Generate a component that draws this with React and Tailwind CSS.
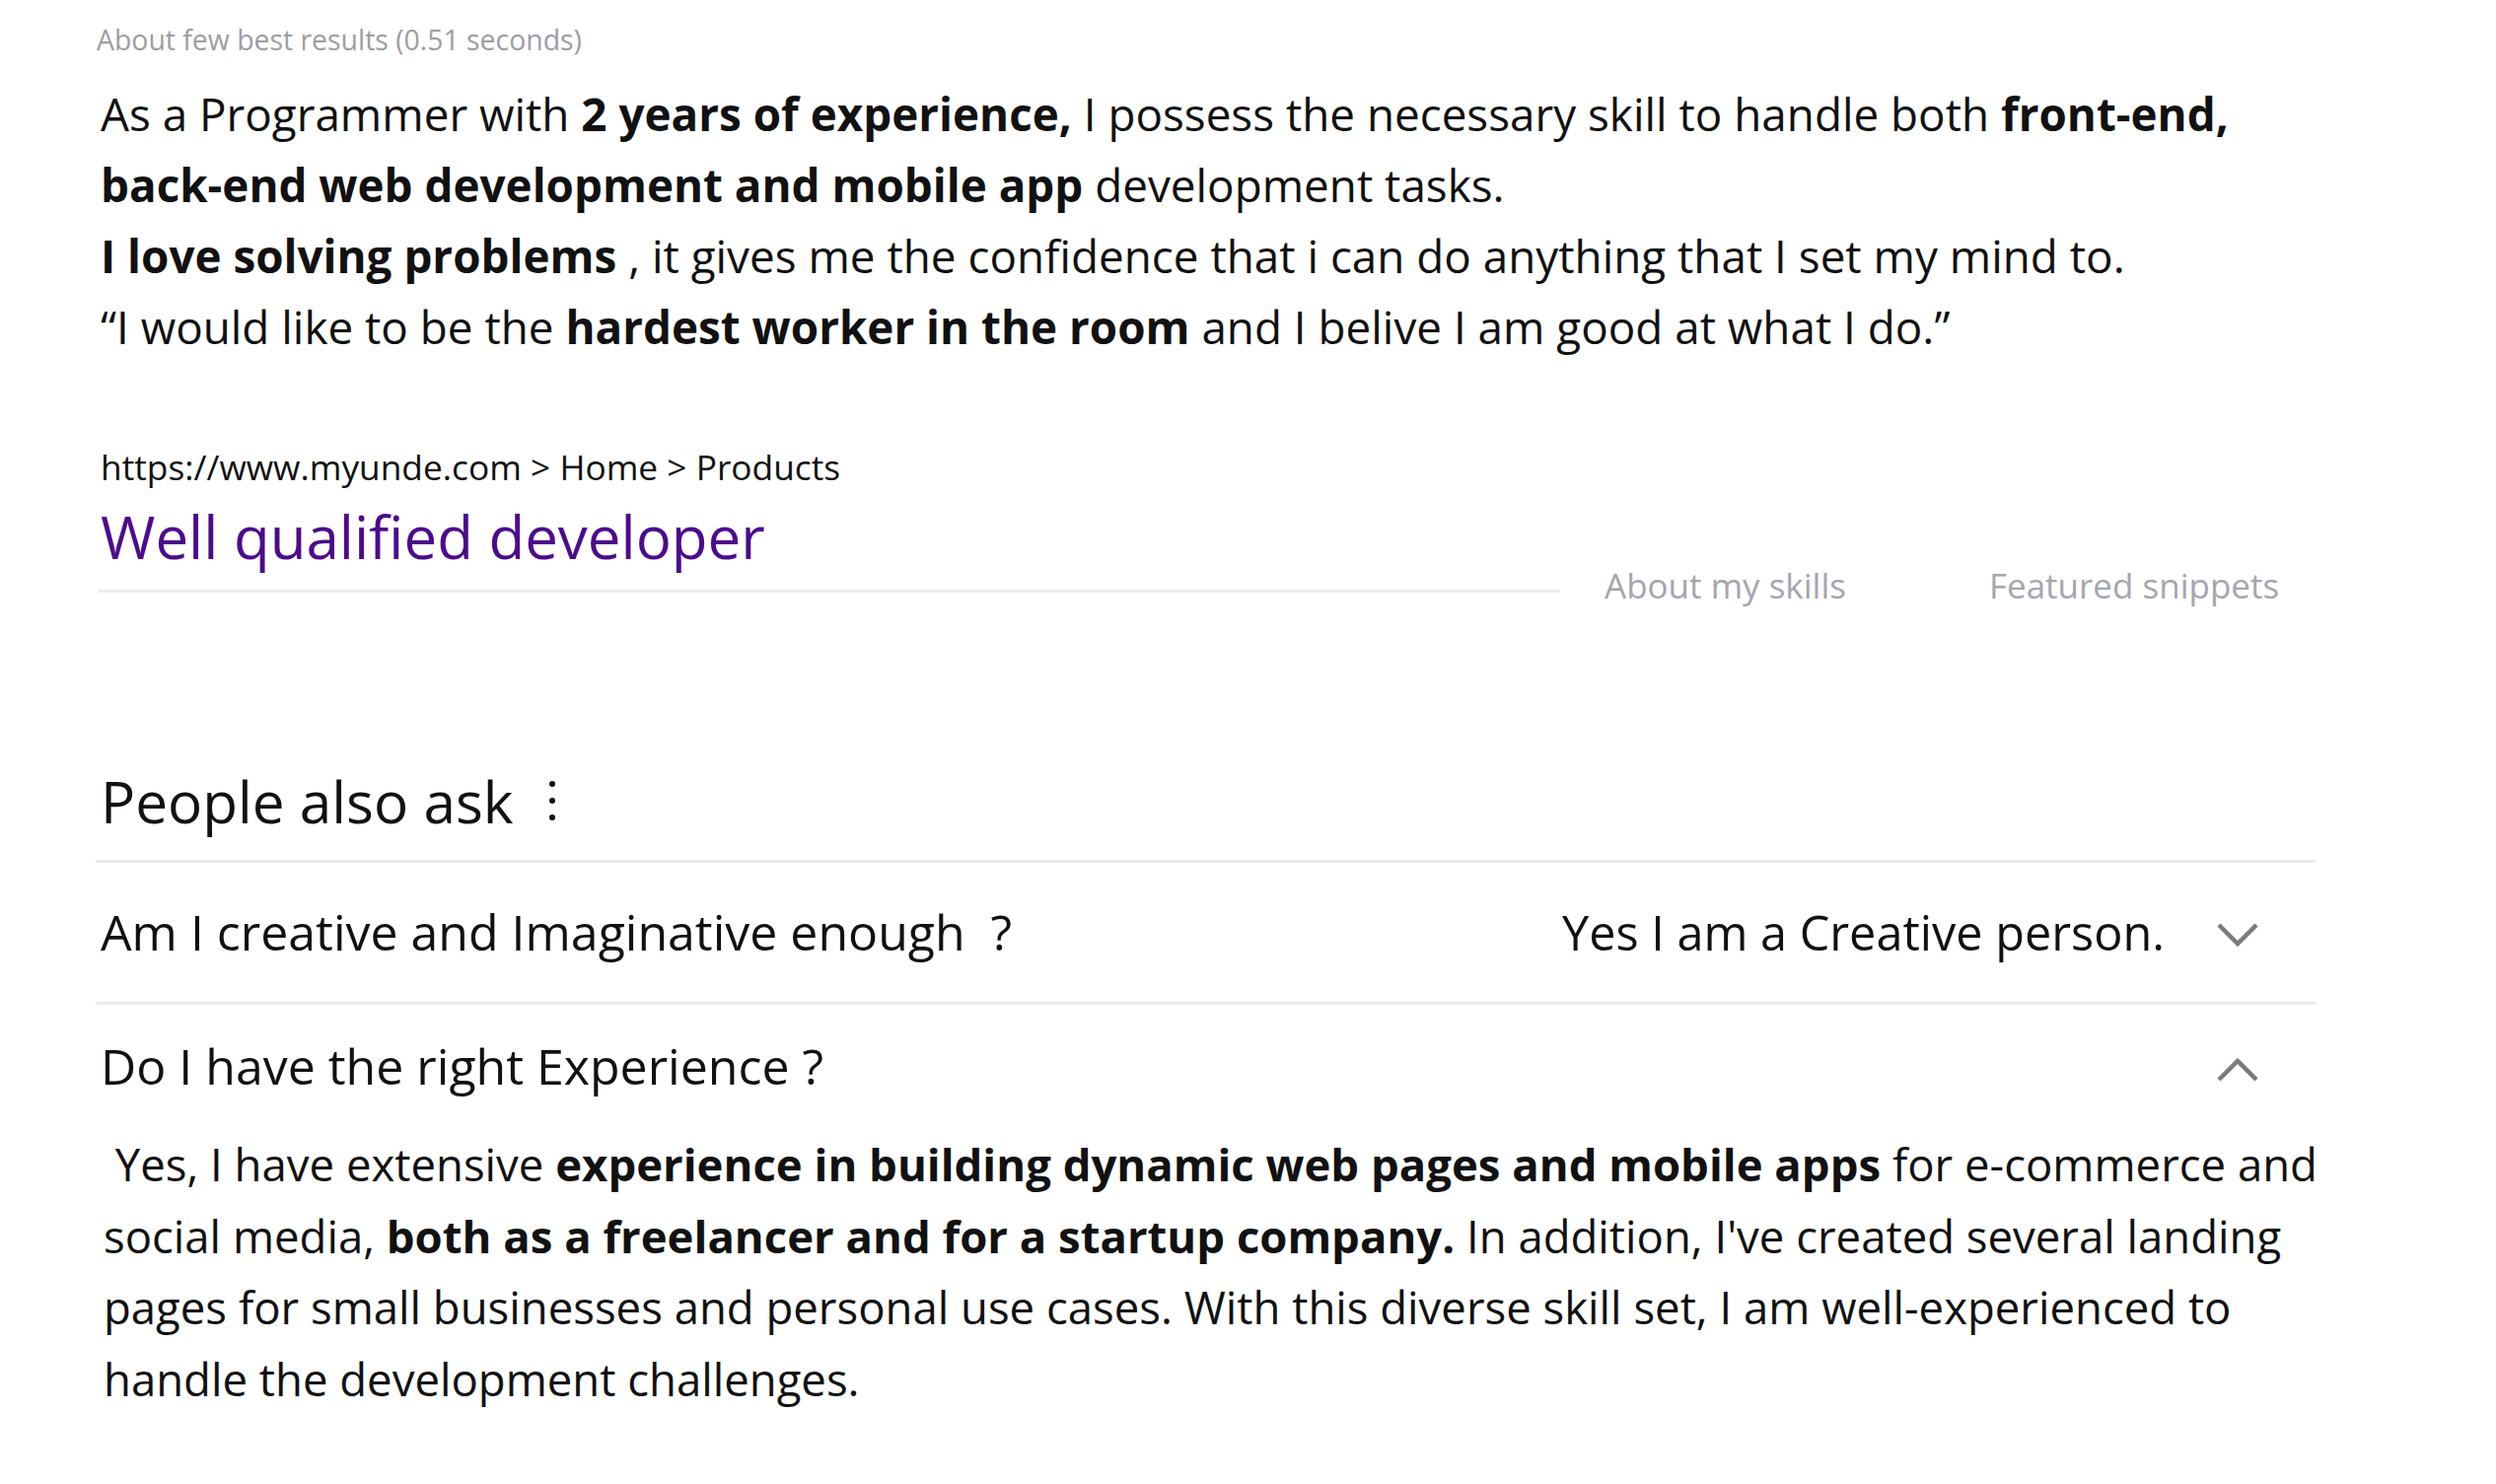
import React from "react";

function Chevron({ up }) {
  return (
    <svg width="44" height="26" viewBox="0 0 44 26" className="shrink-0">
      <polyline
        points={up ? "3,23 22,4 41,23" : "3,3 22,22 41,3"}
        fill="none"
        stroke="#7b7b7b"
        strokeWidth="4.5"
      />
    </svg>
  );
}

export default function App() {
  return (
    <div className="min-h-screen w-full bg-white text-[#111] font-['Open_Sans','Noto_Sans',sans-serif]">
      <div className="pl-[97px] pr-[183px]">
        <div className="pt-[20px] pl-[1px] text-[28.4px] leading-[40px] text-[#9d9ca6] whitespace-nowrap">
          About few best results (0.51 seconds)
        </div>

        <div className="mt-[19px] pl-[5px] text-[45.8px] leading-[72px] whitespace-nowrap">
          <div>
            As a Programmer with <b>2 years of experience,</b> I possess the necessary skill to handle both <b>front-end,</b>
          </div>
          <div>
            <b>back-end web development and mobile app</b> development tasks.
          </div>
          <div>
            <b>I love solving problems</b> , it gives me the confidence that i can do anything that I set my mind to.
          </div>
          <div>
            “I would like to be the <b>hardest worker in the room</b> and I belive I am good at what I do.”
          </div>
        </div>

        <div className="mt-[82px] pl-[5px] text-[35.3px] leading-[48px] whitespace-nowrap">
          https://www.myunde.com &gt; Home &gt; Products
        </div>
        <div className="mt-[17px] pl-[5px] text-[60px] leading-[60px] text-[#4c0b8c] whitespace-nowrap">
          Well qualified developer
        </div>
        <div className="flex h-[40px] items-center">
          <div className="ml-[3px] mt-[10px] h-[3px] w-[1482px] bg-[#ebebeb]" />
          <div className="ml-[45px] text-[35px] text-[#a6a5af] whitespace-nowrap">About my skills</div>
          <div className="ml-[145px] text-[35px] text-[#a6a5af] whitespace-nowrap">Featured snippets</div>
        </div>

        <div className="mt-[166px] flex h-[64px] items-center pl-[5px]">
          <div className="text-[58.5px] leading-[64px] whitespace-nowrap">People also ask</div>
          <div className="ml-[36px] flex flex-col items-center gap-[11px]">
            <span className="block h-[6px] w-[6px] rounded-full bg-[#111]" />
            <span className="block h-[6px] w-[6px] rounded-full bg-[#111]" />
            <span className="block h-[6px] w-[6px] rounded-full bg-[#111]" />
          </div>
        </div>

        <div className="mt-[28px] h-[3px] w-[2251px] bg-[#ebebeb]" />
        <div className="flex h-[141px] w-[2251px] items-center justify-between pl-[5px] pr-[57px]">
          <div className="text-[50px] whitespace-nowrap">Am I creative and Imaginative enough&nbsp; ?</div>
          <div className="flex items-center">
            <div className="text-[48.6px] whitespace-nowrap">Yes I am a Creative person.</div>
            <div className="ml-[52px] mt-[6px]">
              <Chevron />
            </div>
          </div>
        </div>
        <div className="h-[3px] w-[2251px] bg-[#ebebeb]" />
        <div className="flex h-[125px] w-[2251px] items-center justify-between pl-[5px] pr-[57px]">
          <div className="text-[50px] whitespace-nowrap">Do I have the right Experience ?</div>
          <div className="mt-[6px]">
            <Chevron up />
          </div>
        </div>

        <div className="pl-[8px] text-[45.5px] leading-[72.6px] whitespace-nowrap">
          <div>
            &nbsp;Yes, I have extensive <b>experience in building dynamic web pages and mobile apps</b> for e-commerce and
          </div>
          <div>
            social media, <b>both as a freelancer and for a startup company.</b> In addition, I've created several landing
          </div>
          <div>pages for small businesses and personal use cases. With this diverse skill set, I am well-experienced to</div>
          <div>handle the development challenges.</div>
        </div>
      </div>
    </div>
  );
}
